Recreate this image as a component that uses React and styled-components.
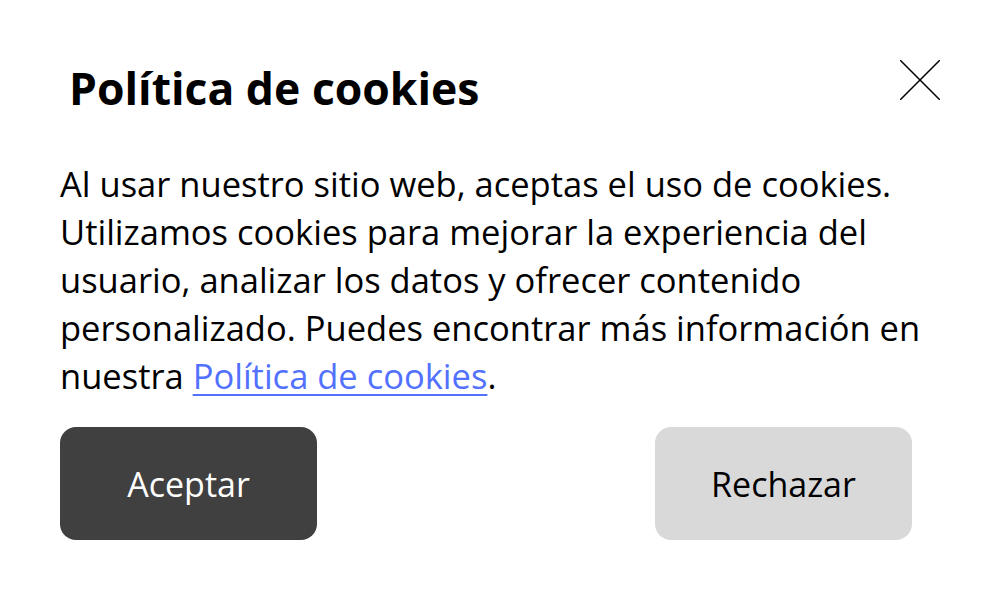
import React from "react";
import styled, { createGlobalStyle } from "styled-components";

const GlobalStyle = createGlobalStyle`
	html, body {
		margin: 0;
		padding: 0;
		background: #ffffff;
	}
	body {
		font-family: "Open Sans", "Noto Sans", sans-serif;
		color: #000000;
	}
`;

const Dialog = styled.div`
	width: 1000px;
	height: 600px;
	box-sizing: border-box;
	padding: 56px 60px 0 60px;
	background: #ffffff;
`;

const Header = styled.div`
	display: flex;
	justify-content: space-between;
	align-items: flex-start;
	padding-left: 9px;
`;

const Title = styled.h2`
	margin: 0;
	font-size: 44.5px;
	font-weight: 700;
	line-height: 64px;
`;

const CloseButton = styled.button`
	border: none;
	background: transparent;
	padding: 0;
	margin-top: 4px;
	width: 40px;
	height: 40px;
	cursor: pointer;
	svg {
		display: block;
	}
`;

const Body = styled.p`
	margin: 40px 0 0 0;
	width: 880px;
	font-size: 34.5px;
	line-height: 48px;
	a {
		color: #5271ff;
		text-decoration: underline;
		text-underline-offset: 5px;
		text-decoration-thickness: 2px;
	}
`;

const Actions = styled.div`
	display: flex;
	justify-content: space-between;
	width: 852px;
	margin-top: 27px;
`;

const Button = styled.button`
	width: 257px;
	height: 113px;
	border: none;
	border-radius: 16px;
	font-family: inherit;
	font-size: 34px;
	background: ${(p) => (p.$primary ? "#404040" : "#d9d9d9")};
	color: ${(p) => (p.$primary ? "#ffffff" : "#000000")};
	cursor: pointer;
`;

export default function App() {
	return (
		<>
			<GlobalStyle />
			<Dialog>
				<Header>
					<Title>Política de cookies</Title>
					<CloseButton aria-label="Cerrar">
						<svg width="40" height="40" viewBox="0 0 40 40">
							<path d="M0 0 L40 40 M40 0 L0 40" stroke="#000" strokeWidth="1.5" fill="none" />
						</svg>
					</CloseButton>
				</Header>
				<Body>
					Al usar nuestro sitio web, aceptas el uso de cookies. Utilizamos cookies para mejorar la experiencia del usuario, analizar los datos y ofrecer contenido personalizado. Puedes encontrar más información en nuestra <a href="#">Política de cookies</a>.
				</Body>
				<Actions>
					<Button $primary>Aceptar</Button>
					<Button>Rechazar</Button>
				</Actions>
			</Dialog>
		</>
	);
}
